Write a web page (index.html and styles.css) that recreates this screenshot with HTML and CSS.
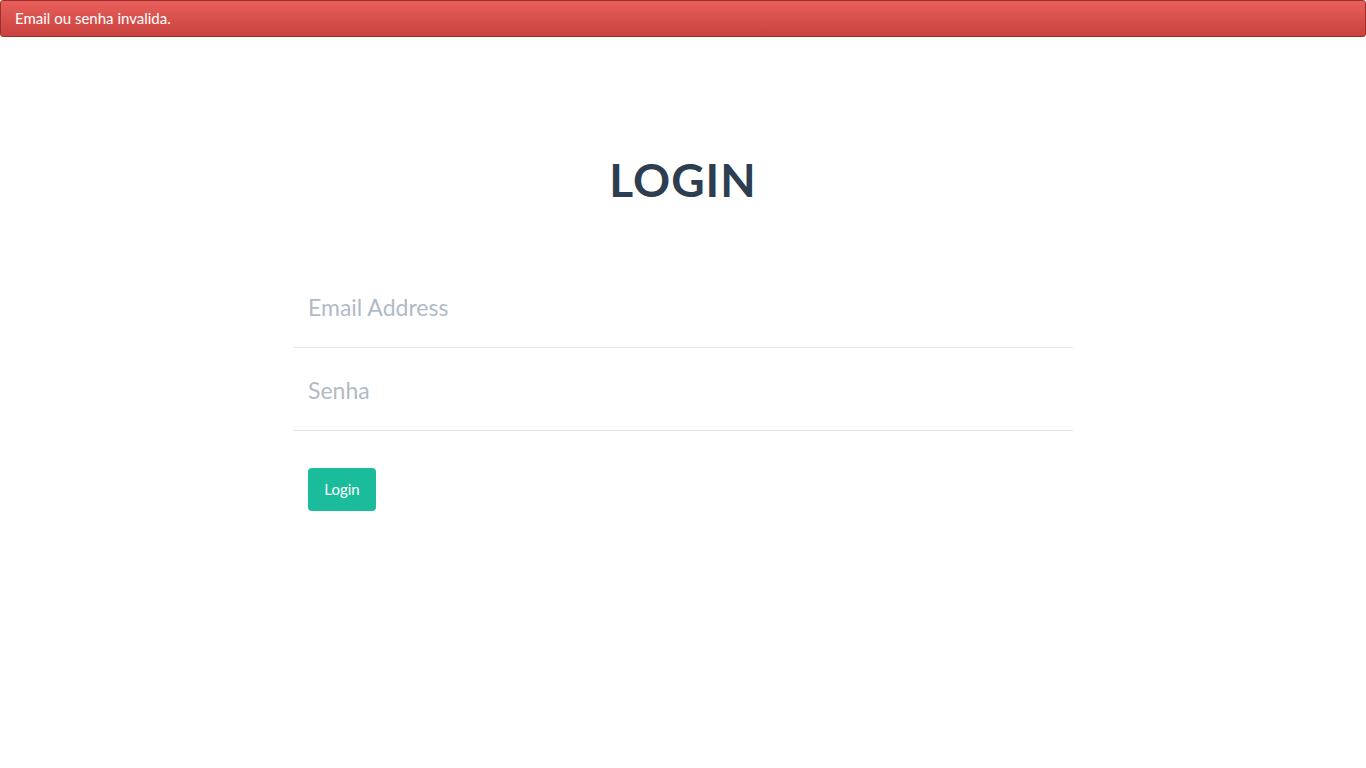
FILE: index.html
```html
<!DOCTYPE html>
<html lang="pt">
<head>
<meta charset="utf-8">
<title>Login</title>
<link rel="stylesheet" href="styles.css">
</head>
<body>
<div class="alert">Email ou senha invalida.</div>
<main class="container">
  <h1 class="title">LOGIN</h1>
  <form class="login-form">
    <input class="field" type="email" placeholder="Email Address">
    <input class="field" type="password" placeholder="Senha">
    <button class="btn" type="button">Login</button>
  </form>
</main>
</body>
</html>
```
FILE: styles.css
```css
* { box-sizing: border-box; }
html, body { margin: 0; padding: 0; background: #fff; }
body {
  font-family: Lato, "Open Sans", "Liberation Sans", sans-serif;
  color: #34495e;
}
.alert {
  height: 37px;
  padding: 8px 14px;
  color: #fff;
  font-size: 15px;
  line-height: 19px;
  background: linear-gradient(to bottom, #e85f5c 0%, #c9423e 100%);
  border: 1px solid #9b2f2b;
  border-radius: 3px;
}
.container {
  width: 780px;
  margin: 0 auto;
}
.title {
  margin: 113px 0 0;
  text-align: center;
  font-size: 46px;
  line-height: 60px;
  font-weight: 700;
  letter-spacing: 1px;
  color: #2c3e50;
}
.login-form {
  display: flex;
  flex-direction: column;
  align-items: flex-start;
  margin-top: 55px;
}
.field {
  width: 100%;
  height: 83px;
  padding: 2px 15px 0;
  border: 0;
  border-bottom: 1px solid #e8e8e8;
  outline: none;
  font-family: inherit;
  font-size: 23px;
  color: #34495e;
  background: transparent;
}
.field::placeholder { color: #b0bbc6; }
.btn {
  margin: 37px 0 0 15px;
  width: 68px;
  height: 43px;
  padding: 0 0 2px;
  border: 0;
  border-radius: 4px;
  background: #1abc9c;
  color: #fff;
  font-family: inherit;
  font-size: 15px;
  cursor: pointer;
}
```
